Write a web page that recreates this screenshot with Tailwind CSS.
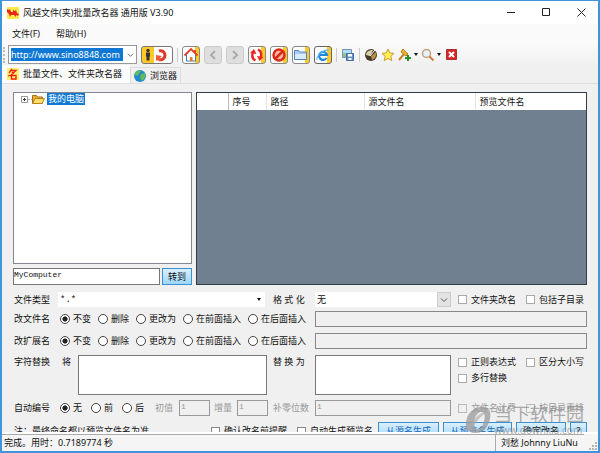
<!DOCTYPE html>
<html lang="zh-CN">
<head>
    <meta charset="UTF-8">
    <meta name="viewport" content="width=device-width, initial-scale=1.0">
    <title>风越文件(夹)批量改名器 通用版 V3.90</title>
    <script src="https://cdn.jsdelivr.net/npm/@tailwindcss/browser@4"></script>
</head>
<body class="flex h-screen flex-col overflow-hidden border-2 border-t border-[#3f94dc] bg-[#f0f0f0] font-['Noto_Sans','Noto_Sans_CJK_SC',sans-serif] text-[9px] leading-3 text-[#111]">

    <!-- 标题栏 -->
    <header class="flex h-[23px] shrink-0 items-center bg-white pl-[5px] pr-3">
        <svg class="h-3 w-3" viewBox="0 0 12 12">
            <rect width="12" height="12" fill="#ffe94a"/>
            <path d="M0 2 2 3 3 2 4 5 6 5 6 3 8 4 9 3 10 6 12 7 11 9 9 8 9 10 7 8 4 8 3 10 2 7 0 5Z" fill="#e8281c"/>
        </svg>
        <h1 class="ml-1 text-[9px] whitespace-nowrap">风越文件(夹)批量改名器 通用版 V3.90</h1>
        <div class="ml-auto flex items-center gap-[26px]">
            <button aria-label="最小化"><svg class="h-[9px] w-[9px]" viewBox="0 0 9 9"><path d="M0 4.5h8" stroke="#222"/></svg></button>
            <button aria-label="最大化"><svg class="h-[9px] w-[9px]" viewBox="0 0 9 9"><path d="M.5 .5h7v7h-7z" fill="none" stroke="#222"/></svg></button>
            <button aria-label="关闭"><svg class="h-[9px] w-[9px]" viewBox="0 0 9 9"><path d="M.5 .5l8 8M8.500 .5l-8 8" stroke="#222"/></svg></button>
        </div>
    </header>

    <!-- 菜单 -->
    <nav class="flex h-5 shrink-0 items-center gap-4 bg-[#fafafa] pl-[10px]">
        <button>文件(F)</button>
        <button>帮助(H)</button>
    </nav>

    <!-- 工具栏 -->
    <div class="flex h-[21px] shrink-0 items-center bg-linear-to-b from-[#fafafa] to-[#f0f0f0] pl-px">
        <span class="h-4 w-[5px] border-l-2 border-dotted border-[#bbb]"></span>
        <label class="flex h-[19px] w-[129px] items-center border border-[#999] bg-white p-[2px]">
            <input aria-label="网址" value="http://www.sino8848.com" class="h-full w-[112px] bg-[#0f78d4] text-[9px] text-white outline-none">
            <svg class="ml-1 h-2 w-2" viewBox="0 0 8 8"><path d="M1 2.500l3 3 3-3" fill="none" stroke="#555"/></svg>
        </label>
        <button aria-label="转到" class="ml-1 flex h-[18px] w-8 items-center rounded-[3px] border border-[#777] bg-linear-to-r from-[#ffc928] from-40% to-white to-40%">
            <svg class="h-4 w-[30px]" viewBox="0 0 30 16">
                <circle cx="6" cy="3.500" r="1.700" fill="#333"/><path d="M4 5.500h4v4H7.500v4h-3v-4H4z" fill="#333"/>
                <path d="M17 4a4.500 4.500 0 1 1 0 8.500" fill="none" stroke="#dc3825" stroke-width="3"/><path d="M14 13.500V8l6 1-2 2 1 2.500z" fill="#ec5a3c"/>
            </svg>
        </button>
        <span class="mx-1 h-[14px] w-px bg-[#ccc]"></span>
        <div class="flex gap-1">
            <button aria-label="主页" class="h-[18px] w-[18px] rounded-[3px] border border-[#888] bg-linear-to-r from-white from-75% to-[#ffc928] to-75%">
                <svg class="h-4 w-4" viewBox="0 0 16 16"><path d="M3.500 8v6h9V8" fill="#fff" stroke="#4777aa"/><path d="M1.500 8.500 8 2l6.500 6.500M12 6V3" fill="none" stroke="#e33d29" stroke-width="1.800"/><path d="M7 10h2.500v4H7z" fill="#e67824"/></svg>
            </button>
            <button aria-label="后退" class="h-[18px] w-[18px] rounded-[3px] border border-[#ccc] bg-[#dedede]">
                <svg class="h-4 w-4" viewBox="0 0 16 16"><path d="M10 4 6 8l4 4" fill="none" stroke="#aaa" stroke-width="2"/></svg>
            </button>
            <button aria-label="前进" class="h-[18px] w-[18px] rounded-[3px] border border-[#ccc] bg-[#dedede]">
                <svg class="h-4 w-4" viewBox="0 0 16 16"><path d="m6 4 4 4-4 4" fill="none" stroke="#aaa" stroke-width="2"/></svg>
            </button>
            <button aria-label="刷新" class="h-[18px] w-[18px] rounded-[3px] border border-[#888] bg-linear-to-r from-white from-75% to-[#ffc928] to-75%">
                <svg class="h-4 w-4" viewBox="0 0 16 16"><path d="M6.500 13.500C3 12 3 8 4 5M9 2.500c3.500 1.500 3.500 5.500 2.500 8.500" fill="none" stroke="#ee2525" stroke-width="2.400"/><path d="M1 6 5 2l2.500 5zM14.500 10l-4 4-2.500-5z" fill="#ee2525"/></svg>
            </button>
            <button aria-label="停止" class="h-[18px] w-[18px] rounded-[3px] border border-[#888] bg-linear-to-r from-white from-75% to-[#ffc928] to-75%">
                <svg class="h-4 w-4" viewBox="0 0 16 16"><circle cx="8" cy="8" r="5.500" fill="#ffb7a0" stroke="#d92a1c" stroke-width="2.500"/><path d="m4 12 8-8" stroke="#d92a1c" stroke-width="2.500"/></svg>
            </button>
            <button aria-label="文件夹" class="h-[18px] w-[18px] rounded-[3px] border border-[#888] bg-linear-to-r from-white from-75% to-[#ffc928] to-75%">
                <svg class="h-4 w-4" viewBox="0 0 16 16"><path d="M1.500 12.500v-9h4l1 1.500h7v7.500z" fill="#a9cdf1" stroke="#5484bd"/><path d="M2 7h11v5H2z" fill="#d9ecfd"/></svg>
            </button>
            <button aria-label="IE 浏览器" class="h-[18px] w-[18px] rounded-[3px] border border-[#666] bg-linear-to-r from-white from-75% to-[#ffc928] to-75%">
                <svg class="h-4 w-4" viewBox="0 0 16 16"><path d="M11.500 11A4 4 0 1 1 12 8H5" fill="none" stroke="#1b87d8" stroke-width="2.200"/><path d="M2 13C1 9 9 2 14 3" fill="none" stroke="#52b5ee" stroke-width="1.200"/></svg>
            </button>
        </div>
        <span class="mx-1 h-[14px] w-px bg-[#ccc]"></span>
        <button aria-label="保存">
            <svg class="h-[14px] w-[14px]" viewBox="0 0 14 14"><path d="M1.500 1.500h9v8h-9z" fill="#8fc58b" stroke="#6d93bd"/><path d="M2 2h8v3H2z" fill="#b6dbf4"/><path d="M5.500 5.500h7v7h-7z" fill="#638fca" stroke="#496fa8"/><path d="M7 6h4v2.500H7zM7.500 10h3v2h-3z" fill="#fff"/></svg>
        </button>
        <span class="mx-1 h-[14px] w-px bg-[#ccc]"></span>
        <div class="flex items-center gap-[3px]">
            <button aria-label="频道">
                <svg class="h-[14px] w-[14px]" viewBox="0 0 14 14"><circle cx="7" cy="7" r="6" fill="#43382b"/><path d="M2 7C2 3 6 2 9 2L6 8z" fill="#d8cfa8"/><path d="M7 8l5-4c1 4-1 7-4 8z" fill="#b49142"/><path d="m6 8 5-6" stroke="#fff"/></svg>
            </button>
            <button aria-label="收藏">
                <svg class="h-[14px] w-[14px]" viewBox="0 0 14 14"><path d="m7 1 1.800 4 4.200.4-3.200 2.900 1 4.300L7 10.400l-3.800 2.200 1-4.300L1 5.400 5.200 5z" fill="#fff05c" stroke="#c99d24"/></svg>
            </button>
            <button aria-label="工具" class="flex items-center gap-[2px]">
                <svg class="h-[14px] w-[14px]" viewBox="0 0 14 14"><path d="m5 1 5 5-2 2-5-4z" fill="#efb536" stroke="#b97a18"/><path d="m6 6-5 6" stroke="#c78527" stroke-width="2"/><path d="M10 7v6M7 10h6" stroke="#248f25" stroke-width="2"/></svg>
                <svg class="h-[3px] w-1" viewBox="0 0 4 3"><path d="M0 0h4L2 3z" fill="#111"/></svg>
            </button>
            <button aria-label="查找" class="flex items-center gap-[2px]">
                <svg class="h-[14px] w-[14px]" viewBox="0 0 14 14"><circle cx="5.500" cy="5.500" r="4" fill="#e7f2fa" stroke="#c5a17d" stroke-width="1.500"/><path d="m8.500 8.500 4 4" stroke="#d07b38" stroke-width="2"/></svg>
                <svg class="h-[3px] w-1" viewBox="0 0 4 3"><path d="M0 0h4L2 3z" fill="#111"/></svg>
            </button>
            <button aria-label="退出" class="ml-[2px]">
                <svg class="h-3 w-3" viewBox="0 0 12 12"><path d="M.5 .5h10v10H.5z" fill="#dc2525" stroke="#aa3030"/><path d="m3 3 5 5M8 3 3 8" stroke="#fff" stroke-width="2"/></svg>
            </button>
        </div>
    </div>

    <!-- 选项卡 -->
    <div class="flex shrink-0 items-end">
        <button class="flex h-[18px] items-center gap-1 bg-[#fcfcfc] pl-[5px] pr-2">
            <svg class="h-3 w-3" viewBox="0 0 12 12"><rect width="12" height="12" fill="#fff06a"/><path d="M5 1 2 5M4 2.500h5L3 8M5 4l2 1.500M4.500 7.500H9V11H4.500zM1 8l3-1" fill="none" stroke="#e6201c" stroke-width="1.300"/></svg>
            批量文件、文件夹改名器
        </button>
        <button class="flex h-4 items-center gap-1 border border-b-0 border-[#ddd] px-[3px]">
            <svg class="h-3 w-3" viewBox="0 0 12 12"><circle cx="6" cy="6" r="6" fill="#2389cf"/><path d="M1 3C3 0 7 0 7 1L5 4 3 6 1 5zM7 4l4-1c1 3 0 6-3 8L6 8z" fill="#64bd54"/></svg>
            浏览器
        </button>
    </div>

    <main class="min-h-0 flex-1 overflow-hidden border-t border-[#e0e0e0] pr-[11px] pl-[11px] pt-2">
        <section class="flex h-[193px] gap-1">
            <div class="flex w-[179px] flex-col gap-1">
                <div class="flex-1 border border-[#828790] bg-white pl-[7px]">
                    <div class="flex items-center">
                        <svg class="h-[7px] w-[7px]" viewBox="0 0 7 7"><path d="M.5 .5h6v6h-6z" fill="#fff" stroke="#999"/><path d="M2 3.500h3M3.500 2v3" stroke="#335"/></svg>
                        <span class="w-1 border-t border-dotted border-[#aaa]"></span>
                        <svg class="h-3 w-[13px]" viewBox="0 0 13 12"><path d="M.5 10.500v-8h4l1 1.500h5v6.500z" fill="#e8ad2c" stroke="#a6711a"/><path d="m.5 10.500 2.500-5h9.500l-2.500 5z" fill="#ffdd68" stroke="#b98420"/></svg>
                        <span class="ml-[2px] bg-[#0f78d4] px-px text-white">我的电脑</span>
                    </div>
                </div>
                <div class="flex h-[17px] gap-[2px]">
                    <input aria-label="路径" value="MyComputer" class="min-w-0 flex-1 border border-[#777] bg-white pb-[3px] font-['Liberation_Mono','Noto_Sans_CJK_SC',monospace] text-[8px] outline-none">
                    <button class="w-[30px] border border-[#3c8fd0] bg-linear-to-b from-[#d9efff] to-[#9bd7fb]">转到</button>
                </div>
            </div>
            <div class="flex-1 border border-[#333b44] bg-[#708090]">
                <table class="w-full table-fixed border-collapse bg-white text-left">
                    <thead>
                        <tr class="h-[17px]">
                            <th class="w-[31px] border-r border-[#bbb]"></th>
                            <th class="w-[38px] border-r border-[#e5e5e5] pl-1 font-normal">序号</th>
                            <th class="w-[98px] border-r border-[#e5e5e5] pl-1 font-normal">路径</th>
                            <th class="w-[111px] border-r border-[#e5e5e5] pl-1 font-normal">源文件名</th>
                            <th class="pl-1 font-normal">预览文件名</th>
                        </tr>
                    </thead>
                </table>
            </div>
        </section>

        <form class="mt-[7px] flex flex-col gap-[7px] pl-px">
            <div class="flex h-[15px] items-center">
                <label for="type" class="w-11">文件类型</label>
                <span class="flex h-full w-[207px] items-center bg-white pr-1">
                    <input id="type" value="*.*" class="min-w-0 flex-1 pl-[2px] font-['Liberation_Mono',monospace] text-[9px] outline-none">
                    <svg class="h-[3px] w-1" viewBox="0 0 4 3"><path d="M0 0h4L2 3z" fill="#111"/></svg>
                </span>
                <label for="format" class="ml-2 w-[42px]">格 式 化</label>
                <span class="flex h-full flex-1 bg-white">
                    <select id="format" class="min-w-0 flex-1 appearance-none pl-[2px] outline-none"><option>无</option></select>
                    <span class="flex w-[14px] items-center justify-center border border-[#ccc] bg-[#e3e3e3]"><svg class="h-2 w-2" viewBox="0 0 8 8"><path d="M1 2.500l3 3 3-3" fill="none" stroke="#555"/></svg></span>
                </span>
                <div class="flex w-[136px] pl-[7px]">
                    <label class="flex w-[68px] items-center gap-1"><input type="checkbox" class="h-[9px] w-[9px] appearance-none border border-[#aaa] bg-white">文件夹改名</label>
                    <label class="flex items-center gap-1 whitespace-nowrap"><input type="checkbox" class="h-[9px] w-[9px] appearance-none border border-[#aaa] bg-white">包括子目录</label>
                </div>
            </div>

            <div class="-mt-[3px] flex h-[15px] items-center">
                <span class="w-[46px]">改文件名</span>
                <div class="flex w-[255px] gap-[7px]">
                    <label class="flex items-center gap-[3px]"><input type="radio" name="name" checked class="h-[10px] w-[10px] appearance-none rounded-full border border-[#444] bg-white bg-radial from-[#222] from-40% to-white to-50%">不变</label>
                    <label class="flex items-center gap-[3px]"><input type="radio" name="name" class="h-[10px] w-[10px] appearance-none rounded-full border border-[#444] bg-white">删除</label>
                    <label class="flex items-center gap-[3px]"><input type="radio" name="name" class="h-[10px] w-[10px] appearance-none rounded-full border border-[#444] bg-white">更改为</label>
                    <label class="flex items-center gap-[3px]"><input type="radio" name="name" class="h-[10px] w-[10px] appearance-none rounded-full border border-[#444] bg-white">在前面插入</label>
                    <label class="flex items-center gap-[3px]"><input type="radio" name="name" class="h-[10px] w-[10px] appearance-none rounded-full border border-[#444] bg-white">在后面插入</label>
                </div>
                <input aria-label="文件名内容" disabled class="h-4 min-w-0 flex-1 border border-[#888] bg-[#f0f0f0]">
            </div>

            <div class="flex h-[15px] items-center">
                <span class="w-[46px]">改扩展名</span>
                <div class="flex w-[255px] gap-[7px]">
                    <label class="flex items-center gap-[3px]"><input type="radio" name="ext" checked class="h-[10px] w-[10px] appearance-none rounded-full border border-[#444] bg-white bg-radial from-[#222] from-40% to-white to-50%">不变</label>
                    <label class="flex items-center gap-[3px]"><input type="radio" name="ext" class="h-[10px] w-[10px] appearance-none rounded-full border border-[#444] bg-white">删除</label>
                    <label class="flex items-center gap-[3px]"><input type="radio" name="ext" class="h-[10px] w-[10px] appearance-none rounded-full border border-[#444] bg-white">更改为</label>
                    <label class="flex items-center gap-[3px]"><input type="radio" name="ext" class="h-[10px] w-[10px] appearance-none rounded-full border border-[#444] bg-white">在前面插入</label>
                    <label class="flex items-center gap-[3px]"><input type="radio" name="ext" class="h-[10px] w-[10px] appearance-none rounded-full border border-[#444] bg-white">在后面插入</label>
                </div>
                <input aria-label="扩展名内容" disabled class="h-4 min-w-0 flex-1 border border-[#888] bg-[#f0f0f0]">
            </div>

            <div class="flex h-10 items-start">
                <span class="w-12 pt-px">字符替换</span>
                <label for="from" class="w-4 pt-px">将</label>
                <textarea id="from" class="h-10 w-[189px] resize-none border border-[#777] bg-white outline-none"></textarea>
                <label for="to" class="ml-[6px] w-[42px] pt-px">替 换 为</label>
                <textarea id="to" class="h-10 min-w-0 flex-1 resize-none border border-[#777] bg-white outline-none"></textarea>
                <div class="flex w-[136px] flex-wrap gap-y-1 pt-px pl-[7px]">
                    <label class="flex w-[68px] items-center gap-1"><input type="checkbox" class="h-[9px] w-[9px] appearance-none border border-[#aaa] bg-white">正则表达式</label>
                    <label class="flex items-center gap-1 whitespace-nowrap"><input type="checkbox" class="h-[9px] w-[9px] appearance-none border border-[#aaa] bg-white">区分大小写</label>
                    <label class="flex w-full items-center gap-1"><input type="checkbox" class="h-[9px] w-[9px] appearance-none border border-[#aaa] bg-white">多行替换</label>
                </div>
            </div>

            <div class="-mt-[2px] flex h-4 items-center text-[#999]">
                <span class="w-[46px] text-[#111]">自动编号</span>
                <div class="flex w-[95px] gap-[9px] text-[#111]">
                    <label class="flex items-center gap-[3px]"><input type="radio" name="num" checked class="h-[10px] w-[10px] appearance-none rounded-full border border-[#444] bg-white bg-radial from-[#222] from-40% to-white to-50%">无</label>
                    <label class="flex items-center gap-[3px]"><input type="radio" name="num" class="h-[10px] w-[10px] appearance-none rounded-full border border-[#444] bg-white">前</label>
                    <label class="flex items-center gap-[3px]"><input type="radio" name="num" class="h-[10px] w-[10px] appearance-none rounded-full border border-[#444] bg-white">后</label>
                </div>
                <label for="start" class="w-6">初值</label>
                <input id="start" value="1" disabled class="h-4 w-[31px] border border-[#999] pb-[3px] pl-px font-['Liberation_Mono',monospace] text-[8px]">
                <label for="step" class="ml-1 w-[23px]">增量</label>
                <input id="step" value="1" disabled class="h-4 w-[31px] border border-[#999] pb-[3px] pl-px font-['Liberation_Mono',monospace] text-[8px]">
                <label for="zero" class="ml-[5px] w-[42px]">补零位数</label>
                <input id="zero" value="1" disabled class="h-4 min-w-0 flex-1 border border-[#999] pb-[3px] pl-px font-['Liberation_Mono',monospace] text-[8px]">
                <div class="flex w-[136px] pl-[7px]">
                    <label class="flex w-[68px] items-center gap-1"><input type="checkbox" disabled class="h-[9px] w-[9px] appearance-none border border-[#bbb]">文件名计费</label>
                    <label class="flex items-center gap-1 whitespace-nowrap"><input type="checkbox" disabled class="h-[9px] w-[9px] appearance-none border border-[#bbb]">按目录重排</label>
                </div>
            </div>

            <div class="-mt-px flex h-[18px] items-center whitespace-nowrap">
                <span class="w-[197px]">注：最终命名都以预览文件名为准</span>
                <label class="flex w-[86px] items-center gap-1"><input type="checkbox" class="h-[9px] w-[9px] appearance-none border border-[#888] bg-white">确认改名前提醒</label>
                <label class="flex items-center gap-1"><input type="checkbox" class="h-[9px] w-[9px] appearance-none border border-[#888] bg-white">自动生成预览名</label>
                <div class="ml-auto flex h-full gap-1 text-[#1668b8]">
                    <button type="button" class="w-[61px] border border-[#3c8fd0] bg-linear-to-b from-[#d9efff] to-[#9bd7fb]">从源名生成</button>
                    <button type="button" class="w-[69px] border border-[#3c8fd0] bg-linear-to-b from-[#d9efff] to-[#9bd7fb]">从预览名生成</button>
                    <button type="button" class="w-[50px] border border-[#3c8fd0] bg-linear-to-b from-[#d9efff] to-[#9bd7fb] text-[#111]">确定改名</button>
                    <button type="button" class="w-[17px] border border-[#3c8fd0] bg-linear-to-b from-[#d9efff] to-[#9bd7fb] text-[#111]">?</button>
                </div>
            </div>
        </form>
    </main>

    <!-- 状态栏 -->
    <footer class="flex h-[19px] shrink-0 border-t-2 border-white bg-[#f5f5f5]">
        <span class="flex-1 border-t border-[#aaa] pt-[2px] pl-[2px]">完成。用时：0.7189774 秒</span>
        <span class="mr-[14px] w-[89px] border-t border-l border-[#aaa] pt-[2px] pl-[5px] whitespace-nowrap">刘愁 Johnny LiuNu</span>
        <svg class="absolute right-[3px] bottom-[3px] h-2 w-2" viewBox="0 0 8 8"><path d="M6 0h2v2H6zM6 3h2v2H6zM6 6h2v2H6zM3 3h2v2H3zM3 6h2v2H3zM0 6h2v2H0z" fill="#b5b5b5"/></svg>
    </footer>

    <!-- 水印 -->
    <div class="pointer-events-none absolute right-4 bottom-[17px] flex items-center gap-px text-[#8a8a8a]/70">
        <svg class="h-[30px] w-[30px]" viewBox="0 0 30 30"><path fill-rule="evenodd" d="M17 2c8-1 12 4 10 12-2 9-8 15-15 14C4 28 1 21 4 13 6 7 11 3 17 2Zm2 5c-5-1-9 7-8 13 1 6 7 5 9-1 2-5 3-11-1-12Z" fill="#999" fill-opacity=".75"/><path d="M0 25C8 16 15 8 28 4 17 11 13 17 8 26Z" fill="#aaa" fill-opacity=".6"/></svg>
        <div>
            <p class="text-[18px] leading-5">当下软件园</p>
            <p class="text-[10px] leading-3">www.downxia.com</p>
        </div>
    </div>
</body>
</html>
